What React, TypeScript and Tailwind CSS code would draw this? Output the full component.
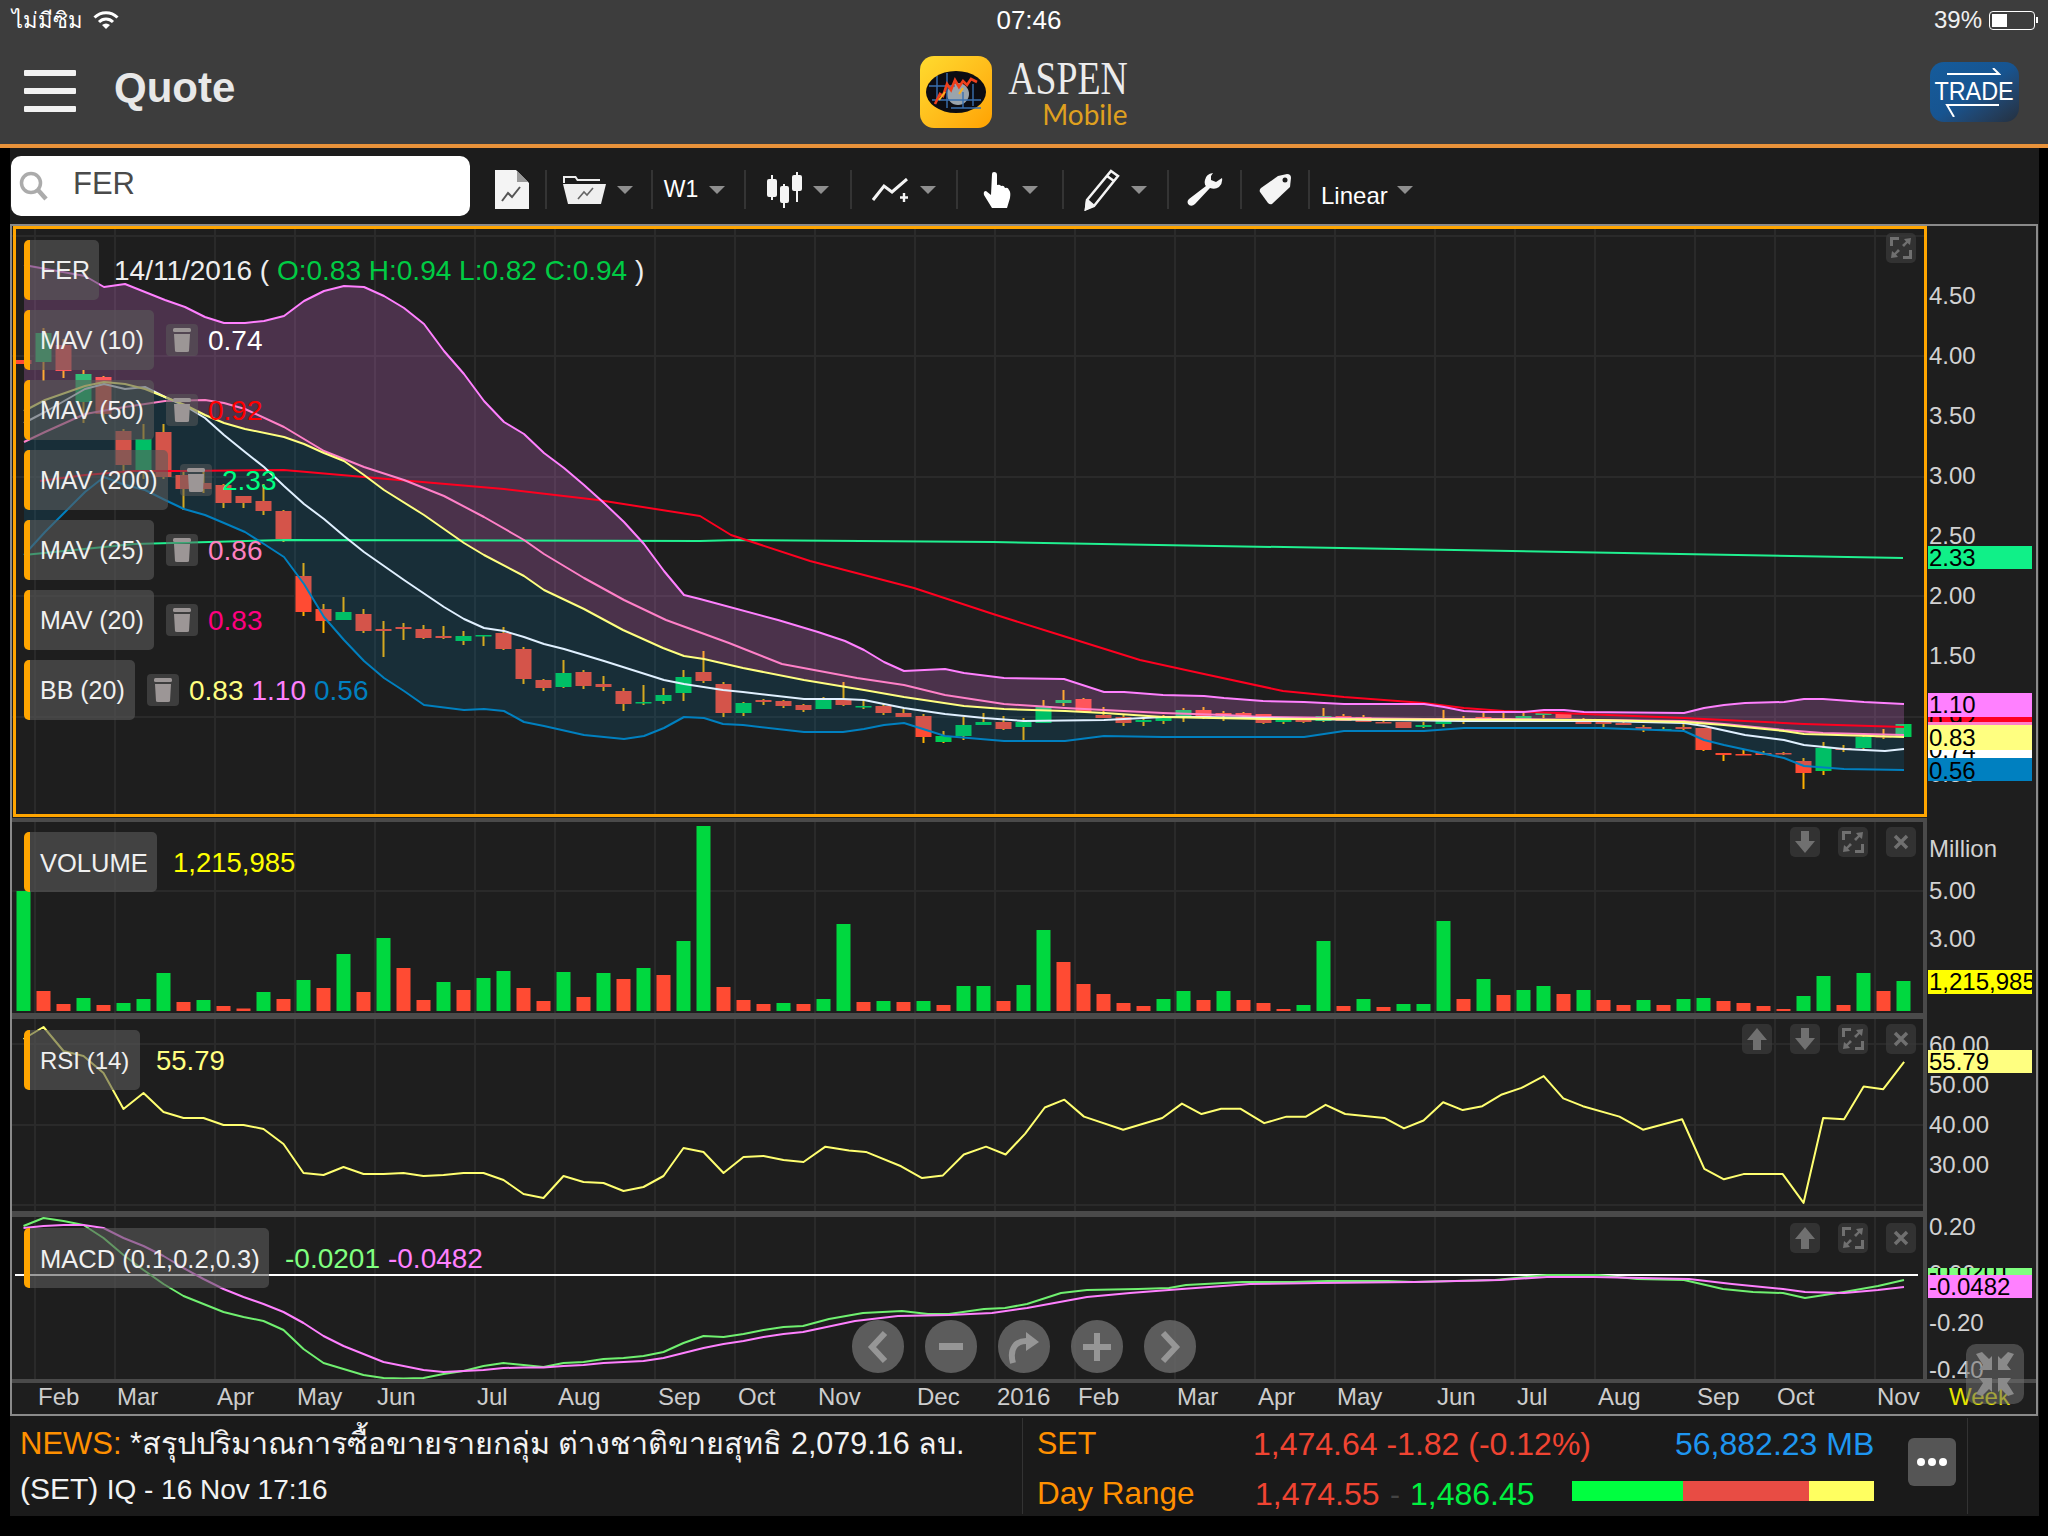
import { ReactNode } from "react";

type Pt = number[];
type Candle = [number, number, number, number, "r" | "g"];

const candleX = (i: number) => 23.5 + i * 20;
const toPath = (pts: Pt[]) => pts.map((p, k) => (k ? "L" : "M") + p[0] + " " + p[1]).join(" ");
const byIndex = (ys: number[]): Pt[] => ys.map((y, i) => [candleX(i), y]);

const gridX = [35, 115, 215, 295, 375, 475, 555, 655, 735, 815, 915, 995, 1075, 1175, 1255, 1335, 1435, 1515, 1595, 1695, 1775, 1875];

const candles: Candle[] = [
  [360, 360, 364, 364, "r"], [328, 333, 362, 381, "g"], [339, 345, 371, 378, "r"], [370, 374, 402, 423, "g"],
  [376, 377, 414, 421, "r"], [429, 431, 465, 475, "r"], [424, 439, 472, 479, "g"], [424, 432, 477, 479, "r"],
  [471, 475, 489, 510, "r"], [469, 483, 489, 493, "r"], [484, 485, 503, 508, "r"], [496, 496, 503, 508, "r"],
  [484, 501, 511, 515, "r"], [510, 511, 539, 542, "r"], [563, 576, 612, 616, "r"], [604, 609, 621, 633, "r"],
  [597, 612, 620, 620, "g"], [609, 614, 631, 633, "r"], [621, 629, 631, 657, "r"], [623, 627, 629, 640, "r"],
  [625, 629, 638, 639, "r"], [626, 636, 638, 639, "r"], [631, 636, 641, 645, "g"], [635, 635, 636, 646, "g"],
  [627, 633, 649, 650, "r"], [647, 649, 679, 684, "r"], [679, 680, 688, 691, "r"], [660, 673, 687, 688, "g"],
  [670, 672, 686, 689, "r"], [676, 684, 687, 691, "r"], [688, 691, 704, 711, "r"], [685, 702, 703, 705, "g"],
  [688, 695, 701, 704, "g"], [670, 677, 693, 701, "g"], [651, 672, 681, 683, "r"], [682, 684, 713, 717, "r"],
  [702, 703, 713, 716, "g"], [699, 700, 702, 705, "r"], [700, 701, 706, 708, "r"], [704, 705, 710, 712, "r"],
  [697, 699, 709, 709, "g"], [682, 699, 705, 706, "r"], [700, 706, 707, 709, "g"], [704, 706, 713, 715, "r"],
  [709, 713, 717, 717, "r"], [714, 716, 737, 743, "r"], [731, 736, 742, 743, "g"], [717, 725, 736, 740, "g"],
  [713, 722, 725, 725, "g"], [716, 722, 729, 730, "r"], [718, 722, 727, 740, "g"], [700, 706, 723, 723, "g"],
  [690, 700, 703, 706, "g"], [698, 699, 712, 712, "r"], [707, 715, 718, 718, "r"], [715, 717, 723, 726, "r"],
  [717, 720, 722, 726, "g"], [715, 717, 721, 724, "g"], [708, 710, 717, 722, "g"], [707, 710, 717, 719, "r"],
  [711, 713, 716, 721, "r"], [712, 713, 716, 719, "r"], [714, 714, 723, 724, "r"], [717, 719, 722, 724, "g"],
  [717, 719, 722, 723, "r"], [708, 716, 721, 722, "g"], [714, 716, 721, 721, "r"], [715, 717, 722, 722, "r"],
  [719, 722, 723, 723, "r"], [722, 722, 728, 728, "r"], [722, 725, 727, 728, "g"], [710, 719, 724, 727, "g"],
  [716, 719, 720, 724, "r"], [713, 717, 719, 719, "r"], [713, 718, 719, 722, "r"], [713, 716, 719, 719, "g"],
  [712, 713, 715, 718, "g"], [713, 713, 718, 718, "r"], [718, 721, 724, 724, "r"], [721, 721, 724, 727, "r"],
  [722, 723, 725, 725, "r"], [725, 727, 729, 732, "r"], [727, 729, 730, 731, "g"], [724, 727, 729, 730, "r"],
  [728, 728, 750, 751, "r"], [753, 753, 755, 761, "r"], [749, 754, 755, 755, "r"], [751, 753, 755, 755, "r"],
  [752, 753, 754, 755, "r"], [758, 761, 773, 789, "r"], [742, 748, 771, 775, "g"], [745, 748, 750, 752, "r"],
  [733, 737, 748, 749, "g"], [729, 736, 737, 739, "r"], [724, 724, 737, 737, "g"],
];

const upperBand: Pt[] = [
  [24, 265], [85, 276], [104, 287], [125, 284], [165, 300], [185, 307], [205, 317], [224, 323], [245, 323], [264, 321], [284, 316], [304, 301], [324, 291], [344, 286], [364, 287], [384, 296], [404, 308], [424, 324], [444, 351], [464, 374], [484, 401], [504, 422], [524, 434], [544, 453], [564, 468], [584, 485], [604, 503], [624, 522], [644, 544], [664, 571], [684, 595], [700, 599], [778, 620], [818, 632], [845, 641], [864, 650], [884, 662], [904, 671], [945, 669], [964, 673], [1004, 678], [1064, 679], [1104, 692], [1124, 692], [1163, 695], [1204, 696], [1224, 698], [1263, 701], [1304, 702], [1344, 704], [1424, 704], [1444, 707], [1464, 711], [1484, 712], [1524, 712], [1544, 710], [1564, 710], [1584, 712], [1684, 713], [1704, 708], [1724, 705], [1745, 703], [1784, 702], [1804, 699], [1823, 699], [1864, 702], [1904, 704],
];
const mav25: Pt[] = [
  [24, 442], [45, 432], [85, 414], [125, 407], [165, 401], [205, 400], [224, 403], [245, 409], [284, 427], [324, 451], [364, 467], [404, 480], [444, 496], [484, 517], [524, 540], [544, 554], [584, 578], [624, 600], [666, 620], [729, 643], [782, 664], [857, 678], [904, 685], [945, 695], [1004, 704], [1065, 708], [1104, 710], [1163, 713], [1224, 715], [1263, 717], [1343, 718], [1424, 719], [1504, 719], [1600, 720], [1684, 721], [1724, 724], [1784, 730], [1823, 733], [1904, 735],
];
const midBand: Pt[] = [
  [24, 411], [45, 400], [85, 386], [104, 382], [125, 384], [145, 389], [165, 397], [185, 405], [205, 415], [224, 423], [245, 429], [284, 437], [304, 444], [324, 453], [344, 461], [364, 475], [384, 490], [424, 515], [464, 543], [484, 555], [524, 576], [544, 590], [584, 609], [623, 630], [663, 648], [684, 656], [704, 659], [743, 668], [804, 680], [864, 690], [904, 697], [964, 706], [1004, 709], [1065, 711], [1104, 713], [1163, 717], [1263, 719], [1600, 720], [1684, 722], [1724, 725], [1784, 731], [1804, 734], [1904, 737],
];
const mav10: Pt[] = [
  [24, 423], [45, 412], [85, 389], [104, 384], [125, 389], [145, 387], [165, 397], [185, 406], [205, 418], [224, 435], [245, 452], [264, 467], [284, 486], [304, 504], [324, 519], [344, 536], [364, 552], [404, 580], [444, 607], [464, 619], [484, 628], [504, 631], [524, 637], [544, 644], [564, 649], [604, 661], [664, 680], [684, 684], [723, 690], [743, 692], [804, 699], [843, 699], [864, 700], [884, 704], [904, 708], [945, 714], [984, 718], [1024, 721], [1104, 720], [1163, 717], [1204, 717], [1304, 719], [1464, 721], [1600, 721], [1684, 723], [1704, 726], [1745, 735], [1784, 740], [1804, 745], [1844, 749], [1885, 751], [1904, 749],
];
const lowerBand: Pt[] = [
  [24, 555], [45, 532], [85, 492], [104, 477], [125, 485], [145, 490], [165, 500], [184, 509], [205, 515], [224, 523], [245, 532], [264, 544], [284, 557], [304, 584], [324, 617], [344, 640], [364, 661], [384, 678], [404, 691], [424, 705], [464, 710], [484, 709], [504, 711], [524, 722], [544, 726], [584, 735], [624, 739], [644, 736], [664, 728], [684, 717], [704, 718], [723, 724], [743, 725], [804, 732], [843, 732], [864, 729], [884, 725], [904, 723], [945, 736], [1004, 741], [1065, 741], [1104, 736], [1163, 737], [1304, 737], [1344, 731], [1424, 731], [1464, 728], [1600, 728], [1684, 731], [1704, 740], [1724, 745], [1784, 758], [1804, 766], [1844, 769], [1904, 770],
];
const mav50: Pt[] = [
  [40, 481], [85, 475], [134, 471], [180, 471], [284, 470], [364, 477], [504, 489], [598, 500], [700, 516], [731, 535], [810, 561], [914, 588], [993, 614], [1060, 635], [1140, 660], [1204, 674], [1283, 691], [1344, 697], [1424, 703], [1464, 708], [1504, 711], [1584, 714], [1684, 718], [1804, 724], [1904, 727],
];
const mav200: Pt[] = [[24, 555], [134, 544], [286, 540], [700, 541], [738, 540], [993, 542], [1903, 558]];

const volumes: [number, "r" | "g"][] = ([
  120, -20, -7, 13, -6, 8, 12, 38, -9, 11, -5, -2.5, 19, -12, 31, -23, 57, -19, 73, -43, -11, 29, -21, 33, 40, -23, -10, 39, -14, 38, -32, 43, -36, 70, 185, -24, -11, -7, 8, -7, 12, 87, -9, 10, -9, 10, -6, 25, 25, -10, 26, 81, -49, -27, -17, -8, -5, 12, 20, -11, 20, -11, -8, -2, 6, 70, -5, 12, -4, 7, 7, 90, -12, 32, -16, 21, 25, -17, 21, -11, -6, 11, -6, 12, 13, -10, -8, -5, -2, 15, 35, -6, 38, -20, 30,
] as number[]).map((v) => [Math.abs(v), v < 0 ? "r" : "g"]);

const rsi: Pt[] = [
  ...byIndex([1039, 1027, 1051, 1056, 1073, 1109, 1093, 1112, 1118, 1118, 1125, 1125, 1129, 1144, 1173, 1175, 1167, 1174, 1174, 1173, 1176, 1175, 1173, 1173, 1180, 1194, 1198, 1176, 1182, 1183, 1191, 1187, 1176, 1148, 1152, 1173, 1157, 1156, 1160, 1162]),
  ...[[632, 878], [650, 881], [663, 882], [690, 893], [706, 902], [722, 900], [738, 884], [755, 878], [770, 884], [785, 868], [800, 848], [815, 842], [830, 855], [860, 865], [890, 856], [905, 845], [920, 853], [935, 849], [950, 849], [968, 860], [985, 855], [1000, 855], [1015, 846], [1030, 853], [1060, 856], [1075, 864], [1090, 858], [1105, 844], [1120, 850], [1135, 847], [1150, 838], [1165, 833], [1182, 824], [1197, 841], [1212, 847], [1240, 855], [1258, 865], [1288, 857], [1305, 895], [1320, 903], [1335, 899], [1365, 899], [1381, 921], [1396, 856], [1412, 857], [1427, 832], [1442, 834], [1458, 813]].map((p) => [p[0] * 1.306, p[1] * 1.306]),
];

const macdFast: Pt[] = [
  ...byIndex([1226, 1218, 1221, 1225, 1238, 1255, 1270, 1284, 1296, 1304, 1312, 1317, 1321, 1330, 1349, 1363, 1369, 1375, 1378, 1378.5, 1378, 1374, 1371, 1366, 1363, 1365, 1367, 1363, 1362, 1359, 1358, 1356, 1352, 1343, 1336, 1337, 1334, 1330, 1327]),
  [803, 1326], [829, 1319], [863, 1313], [902, 1311], [928, 1314], [949, 1314], [984, 1309], [1005, 1308], [1027, 1304], [1061, 1293], [1087, 1290], [1138, 1289], [1169, 1288], [1186, 1285], [1242, 1282], [1293, 1282], [1328, 1281], [1388, 1281], [1414, 1282], [1495, 1280], [1547, 1275], [1598, 1275], [1637, 1279], [1684, 1280], [1723, 1289], [1753, 1292], [1783, 1293], [1805, 1298], [1844, 1292], [1878, 1286], [1904, 1280],
];
const macdSlow: Pt[] = [
  ...byIndex([1228, 1226, 1225, 1225, 1228, 1238, 1246, 1256, 1268, 1279, 1289, 1297, 1304, 1312, 1323, 1336, 1346, 1354, 1362, 1366, 1370, 1372, 1371, 1370, 1368, 1367.5, 1367.5, 1366, 1365, 1363, 1362, 1361, 1358, 1353, 1348, 1344, 1341, 1337, 1334]),
  [803, 1332], [855, 1321], [898, 1316], [949, 1315], [992, 1313], [1027, 1308], [1087, 1297], [1130, 1293], [1182, 1289], [1250, 1284], [1319, 1283], [1414, 1282], [1500, 1280], [1547, 1277], [1594, 1277], [1689, 1279], [1732, 1284], [1783, 1289], [1805, 1292], [1844, 1293], [1878, 1290], [1904, 1287],
];

const dateLabels: [number, string][] = [
  [38, "Feb"], [117, "Mar"], [217, "Apr"], [297, "May"], [377, "Jun"], [477, "Jul"], [558, "Aug"], [658, "Sep"], [738, "Oct"], [818, "Nov"], [917, "Dec"], [997, "2016"], [1078, "Feb"], [1177, "Mar"], [1258, "Apr"], [1337, "May"], [1437, "Jun"], [1517, "Jul"], [1598, "Aug"], [1697, "Sep"], [1777, "Oct"], [1877, "Nov"],
];

const Grid = ({ top, bottom, rows }: { top: number; bottom: number; rows: number[] }) => (
  <g stroke="#2a2a2a" strokeWidth="2">
    {gridX.map((x) => (
      <line key={x} x1={x} x2={x} y1={top} y2={bottom} />
    ))}
    {rows.map((y) => (
      <line key={y} x1={12} x2={1925} y1={y} y2={y} />
    ))}
  </g>
);

const MainChart = () => {
  const upperFill = toPath(upperBand) + " " + [...midBand].reverse().map((p) => "L" + p[0] + " " + p[1]).join(" ") + " Z";
  const lowerFill = toPath(midBand) + " " + [...lowerBand].reverse().map((p) => "L" + p[0] + " " + p[1]).join(" ") + " Z";
  return (
    <svg className="block" width="1915" height="588" viewBox="12 226 1915 588" fill="none">
      <Grid top={226} bottom={814} rows={[236, 356, 477, 596, 717]} />
      {candles.map((c, i) => {
        const x = candleX(i);
        return (
          <g key={i}>
            <line x1={x} x2={x} y1={c[0]} y2={c[3]} stroke="#ffb000" strokeWidth="2" />
            <rect x={x - 8} y={c[1]} width="16" height={Math.max(c[2] - c[1], 1.5)} fill={c[4] === "r" ? "#ff4b33" : "#00cc55"} />
          </g>
        );
      })}
      <path d={upperFill} fill="#ff80ff" fillOpacity="0.2" />
      <path d={lowerFill} fill="#0080c0" fillOpacity="0.17" />
      <g strokeWidth="2" strokeLinejoin="round">
        <path d={toPath(mav200)} stroke="#20f090" />
        <path d={toPath(mav50)} stroke="#ff0020" />
        <path d={toPath(lowerBand)} stroke="#0080c0" />
        <path d={toPath(upperBand)} stroke="#ff80ff" />
        <path d={toPath(mav25)} stroke="#ff80c8" />
        <path d={toPath(mav10)} stroke="#e0f0ff" />
        <path d={toPath(midBand)} stroke="#ffff80" />
      </g>
    </svg>
  );
};

const VolumeChart = () => (
  <svg className="block" width="1911" height="191" viewBox="12 822 1911 191">
    <Grid top={822} bottom={1013} rows={[891]} />
    {volumes.map(([h, c], i) => (
      <rect key={i} x={candleX(i) - 7} y={1011 - h} width="14" height={h} fill={c === "r" ? "#ff4b33" : "#00d83f"} />
    ))}
  </svg>
);

const RsiChart = () => (
  <svg className="block" width="1911" height="192" viewBox="12 1019 1911 192" fill="none">
    <Grid top={1019} bottom={1211} rows={[1044, 1125, 1205]} />
    <path d={toPath(rsi)} stroke="#ffff70" strokeWidth="2" strokeLinejoin="round" />
  </svg>
);

const MacdChart = () => (
  <svg className="block" width="1911" height="162" viewBox="12 1217 1911 162" fill="none">
    <Grid top={1217} bottom={1379} rows={[]} />
    <line x1="15" x2="1918" y1="1275" y2="1275" stroke="#ffffff" strokeWidth="2" />
    <path d={toPath(macdFast)} stroke="#70f070" strokeWidth="2" strokeLinejoin="round" />
    <path d={toPath(macdSlow)} stroke="#ff80ff" strokeWidth="2" strokeLinejoin="round" />
  </svg>
);

const Trash = () => (
  <div className="w-[32px] h-[32px] shrink-0 rounded-[4px] bg-[#5c5c5c]/50 flex items-center justify-center">
    <svg width="20" height="26" viewBox="0 0 20 26" fill="#9c9696">
      <rect x="1" y="1" width="18" height="4" rx="1.5" />
      <path d="M2 7H18L17 24Q17 25 15 25H5Q3 25 3 24Z" />
    </svg>
  </div>
);

const Tag = ({ w, children, size = "text-[25px]" }: { w: string; children: ReactNode; size?: string }) => (
  <div className={"h-[60px] shrink-0 rounded-[5px] bg-[#5a5a5a]/60 border-l-[6px] border-[#ffa500] pl-[10px] pt-[2px] flex items-center text-[#f0f0f0] whitespace-nowrap " + size + " " + w}>
    {children}
  </div>
);

const IndicatorRow = ({ label, w, children }: { label: string; w: string; children: ReactNode }) => (
  <div className="flex items-center h-[60px]">
    <Tag w={w}>{label}</Tag>
    <div className="ml-[12px]">
      <Trash />
    </div>
    <div className="ml-[10px] pt-[2px] text-[28px] whitespace-nowrap flex gap-[8px]">{children}</div>
  </div>
);

const CtrlBox = ({ children }: { children: ReactNode }) => (
  <div className="w-[30px] h-[30px] rounded-[5px] bg-[#3a3a3a]/70 flex items-center justify-center text-[#707070]">{children}</div>
);

const ArrowGlyph = ({ up }: { up?: boolean }) => (
  <svg className={up ? "rotate-180" : ""} width="22" height="24" viewBox="0 0 22 24" fill="currentColor">
    <path d="M7 1H15V11H21L11 23L1 11H7Z" />
  </svg>
);
const ExpandGlyph = () => (
  <svg width="24" height="24" viewBox="0 0 24 24" fill="currentColor">
    <path d="M1 1H10V4H4V10H1Z" />
    <path d="M23 23H14V20H20V14H23Z" />
    <path d="M22 2L21 9L18.500 7L15 11L13 9L17 5.500L15 3Z" />
    <path d="M2 22L3 15L5.500 17L9 13L11 15L7 18.500L9 21Z" />
  </svg>
);
const CloseGlyph = () => (
  <svg width="16" height="16" viewBox="0 0 16 16" fill="none" stroke="currentColor" strokeWidth="3.5">
    <path d="M2 2L14 14M14 2L2 14" />
  </svg>
);

const Controls = ({ pos, up, down, close }: { pos: string; up?: boolean; down?: boolean; close?: boolean }) => (
  <div className={"absolute flex gap-[18px] " + pos}>
    {up && (
      <CtrlBox>
        <ArrowGlyph up />
      </CtrlBox>
    )}
    {down && (
      <CtrlBox>
        <ArrowGlyph />
      </CtrlBox>
    )}
    <CtrlBox>
      <ExpandGlyph />
    </CtrlBox>
    {close && (
      <CtrlBox>
        <CloseGlyph />
      </CtrlBox>
    )}
  </div>
);

const AxisText = ({ y, children }: { y: number; children: ReactNode }) => (
  <div className="absolute left-[2px] text-[24px] leading-[24px] whitespace-nowrap text-[#d2d2d2]" style={{ top: y - 226 - 11 }}>
    {children}
  </div>
);

const Badge = ({ y, h, bg, children }: { y: number; h: number; bg: string; children: ReactNode }) => (
  <div className={"absolute left-[1px] w-[104px] overflow-hidden text-black text-[24px] leading-[24px] whitespace-nowrap pl-[1px] " + bg} style={{ top: y - 226, height: h }}>
    {children}
  </div>
);

const Axis = () => (
  <div className="relative w-[109px] h-[1157px] bg-[#1e1e1e]">
    {[[295, "4.50"], [355, "4.00"], [415, "3.50"], [475, "3.00"], [535, "2.50"], [595, "2.00"], [655, "1.50"]].map(([y, t]) => (
      <AxisText key={t} y={y as number}>{t}</AxisText>
    ))}
    <AxisText y={773}>0.50</AxisText>
    <Badge y={546} h={23} bg="bg-[#10f088]">2.33</Badge>
    <Badge y={693} h={24} bg="bg-[#ff80ff]">1.10</Badge>
    <Badge y={717} h={8} bg="bg-[#ff0020]"><span className="block -mt-[8px]">0.92</span></Badge>
    <Badge y={722} h={3} bg="bg-[#ff80c8]"> </Badge>
    <Badge y={750} h={8} bg="bg-white"><span className="block -mt-[12px]">0.74</span></Badge>
    <Badge y={725} h={25} bg="bg-[#ffff80]"><span className="block pt-[1px]">0.83</span></Badge>
    <Badge y={758} h={23} bg="bg-[#0080c0]"><span className="block pt-[1px]">0.56</span></Badge>

    <AxisText y={848}>Million</AxisText>
    <AxisText y={890}>5.00</AxisText>
    <AxisText y={938}>3.00</AxisText>
    <Badge y={970} h={24} bg="bg-[#ffff00]">1,215,985</Badge>

    <AxisText y={1044}>60.00</AxisText>
    <AxisText y={1084}>50.00</AxisText>
    <AxisText y={1124}>40.00</AxisText>
    <AxisText y={1164}>30.00</AxisText>
    <Badge y={1050} h={23} bg="bg-[#ffff80]">55.79</Badge>

    <AxisText y={1226}>0.20</AxisText>
    <AxisText y={1322}>-0.20</AxisText>
    <AxisText y={1369}>-0.40</AxisText>
    <AxisText y={1273}>0.00</AxisText>
    <Badge y={1268} h={8} bg="bg-[#80ff80]"><span className="block -mt-[8px]">-0.0201</span></Badge>
    <Badge y={1275} h={23} bg="bg-[#ff80ff]">-0.0482</Badge>
  </div>
);

const Caret = () => <div className="w-0 h-0 border-x-[8px] border-x-transparent border-t-[8px] border-t-[#8e8e8e]" />;

const ToolCell = ({ w, caret, children }: { w: string; caret?: boolean; children: ReactNode }) => (
  <div className={"h-[39px] mt-[7px] flex items-center justify-center gap-[11px] border-r-2 border-[#343434] shrink-0 " + w}>
    {children}
    {caret && <Caret />}
  </div>
);

const Toolbar = () => (
  <div className="h-[76px] flex items-center pl-[1px]">
    <div className="w-[459px] h-[60px] bg-white rounded-[10px] flex items-center pl-[8px] mr-[9px]">
      <svg width="30" height="30" viewBox="0 0 30 30" fill="none" stroke="#ababab" strokeWidth="3.5">
        <circle cx="12" cy="12" r="9.5" />
        <path d="M19 19L27 28" strokeWidth="4.5" />
      </svg>
      <span className="ml-[24px] -mt-[4px] text-[31px] text-[#4a4a4a]">FER</span>
    </div>
    <ToolCell w="w-[68px]">
      <svg width="34" height="39" viewBox="0 0 34 39">
        <path d="M0 0H21L34 13V39H0Z" fill="#f4f4f4" />
        <path d="M22 1V12H33Z" fill="#9a9a9a" />
        <path d="M7 31L13 23L17 27L25 17" stroke="#555" strokeWidth="2" fill="none" />
      </svg>
    </ToolCell>
    <ToolCell w="w-[106px] pr-[2px]" caret>
      <svg width="43" height="29" viewBox="0 0 43 29">
        <path d="M0 1H13L15 4H37V6H14L12 3H2V8H0Z" fill="#ececec" />
        <path d="M0 9H43L38 29H5Z" fill="#efefef" />
        <path d="M15 24L21 17L24 20L30 13" stroke="#666" strokeWidth="1.6" fill="none" />
      </svg>
    </ToolCell>
    <ToolCell w="w-[93px] pr-[8px]" caret>
      <span className="text-[23px] text-white">W1</span>
    </ToolCell>
    <ToolCell w="w-[106px]" caret>
      <svg width="35" height="36" viewBox="0 0 35 36" fill="#f4f4f4" stroke="#f4f4f4" strokeWidth="2">
        <path d="M5 3V28M17 12V36M30 0V30" fill="none" />
        <rect x="1" y="8" width="8" height="16" rx="1" />
        <rect x="14" y="15" width="7" height="15" rx="1" />
        <rect x="26" y="4" width="8" height="14" rx="1" />
      </svg>
    </ToolCell>
    <ToolCell w="w-[106px]" caret>
      <svg width="37" height="24" viewBox="0 0 37 24" fill="none" stroke="#f4f4f4" strokeWidth="3">
        <path d="M1 22L12 8L20 14L35 1" />
        <path d="M32 15V24M28 19.500H36" strokeWidth="2.4" />
      </svg>
    </ToolCell>
    <ToolCell w="w-[106px]" caret>
      <svg width="28" height="36" viewBox="0 0 28 36" fill="#ffffff">
        <path d="M9 2Q9 0 11 0Q14 0 14 3V13Q17 12 18 14Q21 13 22 16Q25 15 26 18Q28 20 27 26L24 36H9L1 23Q0 19 3 19L8 23Z" />
      </svg>
    </ToolCell>
    <ToolCell w="w-[105px]" caret>
      <svg width="36" height="42" viewBox="0 0 36 42" fill="none" stroke="#f4f4f4" strokeWidth="2.5">
        <path d="M27 2L34 7L10 37L2 40L3 31Z" />
        <path d="M23 7L30 12M3 31L10 37" />
        <path d="M2 40L3 33L8 37Z" fill="#f4f4f4" />
      </svg>
    </ToolCell>
    <ToolCell w="w-[73px]">
      <svg width="37" height="33" viewBox="0 0 37 33" fill="#f8f8f8">
        <path d="M27 0Q20 1 19 7Q18 11 20 13L3 26Q0 29 3 32Q6 34 9 31L24 15Q29 17 33 14Q37 10 36 5L30 9L25 7L25 3Z" />
      </svg>
    </ToolCell>
    <ToolCell w="w-[68px]">
      <svg width="32" height="31" viewBox="0 0 32 31">
        <path d="M19 2L28 0Q32 0 32 4L31 13L13 30Q11 31 9 29L1 18Q0 16 2 14Z" fill="#f4f4f4" />
        <circle cx="26" cy="6" r="2.500" fill="#1c1c1c" />
      </svg>
    </ToolCell>
    <div className="self-start h-[76px] flex ml-[11px] items-start gap-[9px]">
      <span className="text-[24px] leading-[28px] text-white mt-[34px]">Linear</span>
      <div className="mt-[38px]">
        <Caret />
      </div>
    </div>
  </div>
);

const RoundBtn = ({ children }: { children: ReactNode }) => (
  <div className="w-[52px] h-[53px] rounded-full bg-[#6c6c6c]/80 flex items-center justify-center text-[#969696]">{children}</div>
);

const Charts = () => (
  <div className="flex">
    <div className="w-[1915px]">
      {/* price */}
      <div className="relative h-[592px] bg-[#1e1e1e] overflow-hidden">
        <MainChart />
        <div className="absolute left-[1px] top-0 right-0 h-[591px] border-[3px] border-[#ffa500]" />
        <div className="absolute left-[12px] top-[14px] flex flex-col gap-[10px]">
          <div className="flex items-center h-[60px]">
            <Tag w="w-[75px]">FER</Tag>
            <div className="ml-[15px] pt-[2px] text-[28px] text-[#eeeeee] whitespace-nowrap">
              14/11/2016 ( <span className="text-[#00cc44]">O:0.83 H:0.94 L:0.82 C:0.94</span> )
            </div>
          </div>
          <IndicatorRow label="MAV (10)" w="w-[130px]"><span className="text-white">0.74</span></IndicatorRow>
          <IndicatorRow label="MAV (50)" w="w-[130px]"><span className="text-[#ff0000]">0.92</span></IndicatorRow>
          <IndicatorRow label="MAV (200)" w="w-[144px]"><span className="text-[#00ff80]">2.33</span></IndicatorRow>
          <IndicatorRow label="MAV (25)" w="w-[130px]"><span className="text-[#ff80c0]">0.86</span></IndicatorRow>
          <IndicatorRow label="MAV (20)" w="w-[130px]"><span className="text-[#ff0080]">0.83</span></IndicatorRow>
          <IndicatorRow label="BB (20)" w="w-[111px]">
            <span className="text-[#ffff80]">0.83</span>
            <span className="text-[#ff80ff]">1.10</span>
            <span className="text-[#0080c0]">0.56</span>
          </IndicatorRow>
        </div>
        <Controls pos="top-[7px] right-[11px]" />
      </div>
      <div className="h-[4px] bg-[#4a4a4a]" />
      {/* volume */}
      <div className="relative h-[191px] bg-[#1e1e1e] border-r-[4px] border-[#4a4a4a]">
        <VolumeChart />
        <div className="absolute left-[12px] top-[10px] flex items-center gap-[16px]">
          <Tag w="w-[133px]" size="text-[25.5px]">VOLUME</Tag>
          <span className="pt-[2px] text-[27.5px] text-[#ffff00]">1,215,985</span>
        </div>
        <Controls pos="top-[5px] right-[7px]" down close />
      </div>
      <div className="h-[6px] bg-[#4a4a4a]" />
      {/* rsi */}
      <div className="relative h-[192px] bg-[#1e1e1e] border-r-[4px] border-[#4a4a4a]">
        <RsiChart />
        <div className="absolute left-[12px] top-[11px] flex items-center gap-[16px]">
          <Tag w="w-[116px]" size="text-[24px]">RSI (14)</Tag>
          <span className="pt-[2px] text-[27.5px] text-[#ffff80]">55.79</span>
        </div>
        <Controls pos="top-[5px] right-[7px]" up down close />
      </div>
      <div className="h-[6px] bg-[#4a4a4a]" />
      {/* macd */}
      <div className="relative h-[162px] bg-[#1e1e1e] border-r-[4px] border-[#4a4a4a]">
        <MacdChart />
        <div className="absolute left-[12px] top-[11px] flex items-center gap-[16px]">
          <Tag w="w-[245px]" size="text-[25.5px]">MACD (0.1,0.2,0.3)</Tag>
          <span className="pt-[2px] text-[28px] text-[#80ff80]">-0.0201</span>
          <span className="pt-[2px] text-[28px] text-[#ff80ff] -ml-[8px]">-0.0482</span>
        </div>
        <Controls pos="top-[6px] right-[7px]" up close />
        <div className="absolute left-[840px] top-[103px] flex gap-[21px]">
          <RoundBtn>
            <svg width="22" height="34" viewBox="0 0 22 34" fill="none" stroke="currentColor" strokeWidth="6"><path d="M18 3L5 17L18 31" /></svg>
          </RoundBtn>
          <RoundBtn>
            <div className="w-[24px] h-[7px] bg-[#969696]" />
          </RoundBtn>
          <RoundBtn>
            <svg width="32" height="36" viewBox="0 0 32 36" fill="none"><path d="M5 34C1 20 8 11 20 12" stroke="currentColor" strokeWidth="6" /><path d="M18 3L31 13L18 22Z" fill="currentColor" /></svg>
          </RoundBtn>
          <RoundBtn>
            <svg width="28" height="28" viewBox="0 0 28 28" fill="currentColor"><path d="M11 0H17V11H28V17H17V28H11V17H0V11H11Z" /></svg>
          </RoundBtn>
          <RoundBtn>
            <svg width="22" height="34" viewBox="0 0 22 34" fill="none" stroke="currentColor" strokeWidth="6"><path d="M4 3L17 17L4 31" /></svg>
          </RoundBtn>
        </div>
      </div>
    </div>
    <div className="relative">
      <Axis />
      <div className="absolute z-10 left-[39px] top-[1118px] w-[58px] h-[60px] rounded-[10px] bg-[#6e6e6e]/55 flex items-center justify-center text-[#8a8a8a]">
        <svg width="42" height="48" viewBox="0 0 42 48" fill="currentColor">
          <path d="M2 4L8 2L15 9L18 6V20H5L9 15Z" />
          <path d="M40 4L34 2L27 9L24 6V20H37L33 15Z" />
          <path d="M2 44L8 46L15 39L18 42V28H5L9 33Z" />
          <path d="M40 44L34 46L27 39L24 42V28H37L33 33Z" />
        </svg>
      </div>
    </div>
  </div>
);

const DateRow = () => (
  <div className="relative h-[31px] border-t-[4px] border-[#4a4a4a] box-content -mt-[4px] bg-[#1e1e1e] text-[24px] leading-[27px] text-[#cdcdcd]">
    {dateLabels.map(([x, t], k) => (
      <span key={k} className="absolute top-0" style={{ left: x - 12 }}>
        {t}
      </span>
    ))}
    <span className="absolute top-0 left-[1937px] text-[#e4e400]">Week</span>
  </div>
);

const NewsBar = () => (
  <div className="h-[100px] flex bg-[#1a1a1a]">
    <div className="w-[1013px] pl-[10px] border-r border-[#333333] my-[2px] text-[#f2f2f2] whitespace-nowrap">
      <div className="h-[52px] leading-[50px] text-[30.5px]">
        <span className="text-[31px] text-[#ff9000]">NEWS:</span> *สรุปปริมาณการซื้อขายรายกลุ่ม ต่างชาติขายสุทธิ 2,079.16 ลบ.
      </div>
      <div className="leading-[40px] mt-[-1px] text-[30px]">
        (SET) <span className="text-[28px]">IQ - 16 Nov 17:16</span>
      </div>
    </div>
    <div className="flex-1 flex pl-[14px] whitespace-nowrap">
      <div className="w-[871px]">
        <div className="flex items-center h-[56px]">
          <span className="w-[216px] text-[30.5px] text-[#ff9000]">SET</span>
          <span className="w-[422px] text-[32px] text-[#f04432]">1,474.64 -1.82 (-0.12%)</span>
          <span className="text-[32px] text-[#1e96f0]">56,882.23 MB</span>
        </div>
        <div className="flex items-center h-[44px]">
          <span className="w-[218px] text-[31.5px] text-[#ff9000]">Day Range</span>
          <span className="w-[135px] text-[32px] text-[#f04432]">1,474.55</span>
          <span className="w-[20px] text-[30px] text-[#444444]">-</span>
          <span className="w-[162px] text-[32px] text-[#00f040]">1,486.45</span>
          <div className="flex h-[20px] w-[302px] -mt-[6px]">
            <div className="w-[111px] bg-[#00ff40]" />
            <div className="w-[126px] bg-[#e84c44]" />
            <div className="flex-1 bg-[#ffff60]" />
          </div>
        </div>
      </div>
      <div className="mt-[22px] w-[48px] h-[48px] rounded-[6px] bg-[#555555] flex items-center justify-center gap-[3px]">
        <i className="w-[8px] h-[8px] rounded-full bg-white" />
        <i className="w-[8px] h-[8px] rounded-full bg-white" />
        <i className="w-[8px] h-[8px] rounded-full bg-white" />
      </div>
      <div className="ml-[11px] my-[2px] border-l border-[#333333]" />
    </div>
  </div>
);

const Header = () => (
  <div className="h-[144px] bg-[#3d3d3d] flex flex-col">
    <div className="h-[40px] grid grid-cols-3 items-center px-[12px] text-white">
      <div className="flex items-center gap-[10px]">
        <span className="text-[22px]">ไม่มีซิม</span>
        <svg width="26" height="19" viewBox="0 0 26 19" fill="none" stroke="#ffffff" strokeWidth="3">
          <path d="M1.500 6.500C8 0 18 0 24.500 6.500" />
          <path d="M6 11C10 7 16 7 20 11" />
          <path d="M13 18L9 14C11.500 12 14.500 12 17 14Z" fill="#ffffff" stroke="none" />
        </svg>
      </div>
      <div className="text-center text-[26px] pl-[10px]">07:46</div>
      <div className="flex justify-end items-center gap-[7px] text-[24px] text-[#f0f0f0] pr-[1px]">
        39%
        <div className="relative w-[46px] h-[19px] border-[1.5px] border-white rounded-[4px] p-[2px]">
          <div className="w-[15px] h-full bg-white" />
          <div className="absolute -right-[4px] top-[5px] w-[2px] h-[6px] bg-white" />
        </div>
      </div>
    </div>
    <div className="flex-1 grid grid-cols-3 items-center px-[24px]">
      <div className="flex items-center gap-[38px] -mt-[2px]">
        <div className="w-[52px] flex flex-col gap-[12px]">
          <div className="h-[6px] rounded-[1px] bg-[#f2f2f2]" />
          <div className="h-[6px] rounded-[1px] bg-[#f2f2f2]" />
          <div className="h-[6px] rounded-[1px] bg-[#f2f2f2]" />
        </div>
        <span className="text-[42px] font-bold text-[#e8e8e8] -mt-[8px]">Quote</span>
      </div>
      <div className="flex justify-center items-center gap-[15px]">
        <div className="w-[72px] h-[72px] rounded-[14px] bg-gradient-to-br from-[#ffdb2e] to-[#ffa200] flex items-center justify-center">
          <svg width="62" height="44" viewBox="0 0 62 44">
            <ellipse cx="31" cy="22" rx="30" ry="21" fill="#0c0c12" />
            <circle cx="33" cy="24" r="11" fill="#9aa4ac" />
            <path d="M12 6V30M22 3V38M4 16H30M7 30H56M38 38V22M48 36V14M26 38H56" stroke="#3a70b0" strokeWidth="1.400" fill="none" />
            <path d="M10 34L15 24L18 26L22 14L26 20L30 10L34 17L38 11L42 15L46 9L52 12" stroke="#f0401c" strokeWidth="2.600" fill="none" />
            <path d="M14 30L20 22M34 24L38 18" stroke="#f7b020" strokeWidth="2" />
          </svg>
        </div>
        <div className="w-[120px] flex flex-col items-end">
          <span className="font-['Liberation_Serif'] text-[46px] leading-[44px] text-[#ececec] scale-x-[0.82] origin-right whitespace-nowrap">ASPEN</span>
          <span className="font-['Lato'] text-[28px] leading-[28px] -mt-[1px] text-[#dfa020]">Mobile</span>
        </div>
      </div>
      <div className="flex justify-end pr-[5px]">
        <div className="relative w-[89px] h-[60px] rounded-[14px] bg-gradient-to-br from-[#155c9c] via-[#175490] to-[#24303f] flex items-center justify-center">
          <svg className="absolute left-[17px] top-[6px]" width="54" height="10" viewBox="0 0 54 10" fill="none" stroke="#ffffff" strokeWidth="2">
            <path d="M0 6H52L46 0" />
          </svg>
          <span className="text-[26px] leading-[26px] text-white scale-x-[0.9] -mt-[2px]">TRADE</span>
          <svg className="absolute left-[15px] bottom-[5px]" width="54" height="14" viewBox="0 0 54 14" fill="none" stroke="#ffffff" strokeWidth="2">
            <path d="M54 2H2L9 14" />
          </svg>
        </div>
      </div>
    </div>
  </div>
);

export default function App() {
  return (
    <div className="relative w-[2048px] h-[1536px] bg-black overflow-hidden font-['Liberation_Sans','Noto_Sans',sans-serif]">
      <Header />
      <div className="h-[4px] bg-[#e8923a]" />
      <div className="ml-[10px] w-[2029px] bg-[#1c1c1c]">
        <Toolbar />
        <div className="w-[2028px] border-x-2 border-y-2 border-[#8a8a8a]">
          <Charts />
          <DateRow />
        </div>
        <NewsBar />
      </div>
    </div>
  );
}
